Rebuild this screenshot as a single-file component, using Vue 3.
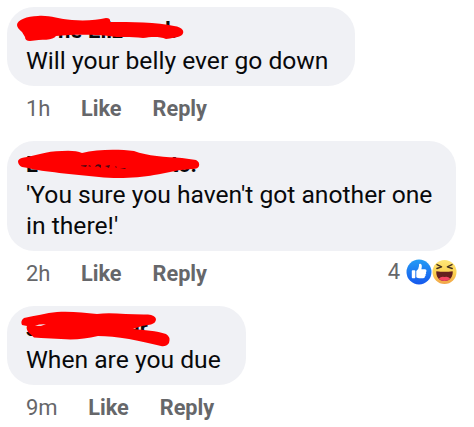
<script setup>
const comments = [
  {
    id: 1, size: 'first', lines: ['Will your belly ever go down'], age: '1h',
    strokes: ['M17 25C17 20 27 16 38 16C49 15 58 19 72 20C86 21 97 20 106 18Q111 18 110 22C130 22 158 22 174 26C183 27 185 32 182 35C178 38 171 38 166 39C159 36 150 37 143 38C130 36 119 38 109 36C87 34 70 35 56 36C53 41 42 39 30 41Q25 41 25 37L22 32Q17 28 17 25Z'],
    bits: [{ x: 58, t: 'ne' }, { x: 88, t: 'Eliz' }, { x: 165, t: 'l.' }],
    hints: [],
  },
  {
    id: 2, size: 'second', lines: ["'You sure you haven't got another one", "in there!'"], age: '2h', count: 4,
    strokes: ['M24 157.500C36 156 45 151 62 151Q75 150 82 153C97 149 119 149 134 151C147 156 166 157 182 158L196 160Q200 162 199 166Q198 169 193 169C181 169 167 173 154 175C139 178 116 179 99 177C73 174 43 172 28 168L22 167Q18 165 18 161Q19 158 24 157.500Z'],
    bits: [{ x: 26, t: 'L' }, { x: 171, t: 'to.' }],
    hints: ['M81 165.500L87 165 86 167 81 166Z', 'M88 166L90 165 91 167Z M95 167Q96 163 101 165L101 168 98 166Z M105 166L110 165 109 168Z M115 167L116 166 117 168 M120 168L126 168 125 169Z'],
  },
  {
    id: 3, size: 'third', lines: ['When are you due'], age: '9m',
    strokes: ['M24 318C35 316 46 313 57 312C72 311 84 313 97 314C112 312 129 315 148 314.500Q155 315 156 319Q156 323 151 324.500L142 326 133 329C144 330 157 331 166 334Q171 337 169 343Q166 347 161 346C151 344 141 341 129 339C117 337 107 336 98 336C85 339 74 340 61 339L41 338 34 337.500 29 333Q26 330 27 326L22 325Q20 321 24 318Z'],
    bits: [{ x: 26, t: 's' }, { x: 128, t: 'ar' }],
    hints: [],
  },
]
const tops = [7, 141, 306]
</script>

<template>
  <main class="thread">
    <article v-for="(c, i) in comments" :key="c.id" class="comment" :class="c.size">
      <div class="bubble">
        <svg class="name" width="220" height="38" :viewBox="`7 ${tops[i]} 220 38`" aria-hidden="true">
          <text v-for="b in c.bits" :key="b.x" :x="b.x" :y="tops[i] + (i === 2 ? 29.5 : 30.5)" class="bit">{{ b.t }}</text>
          <path v-for="s in c.strokes" :key="s" :d="s" fill="#ff0000" />
          <path v-for="h in c.hints" :key="h" :d="h" fill="#4b0710" />
          <path v-if="i === 2" d="M35 326L39 324.500 46 324 41 326Z" fill="#f1d8dd" />
        </svg>
        <p v-for="l in c.lines" :key="l" class="line">{{ l }}</p>
      </div>
      <div class="meta">
        <span class="age">{{ c.age }}</span>
        <b class="like">Like</b>
        <b>Reply</b>
        <span v-if="c.count" class="reactions">
          <span class="count">{{ c.count }}</span>
          <svg width="51" height="26" viewBox="0 0 51 26">
            <defs>
              <linearGradient id="blue" x2="0" y2="1"><stop stop-color="#249cf5" /><stop offset="1" stop-color="#1558ed" /></linearGradient>
              <linearGradient id="yellow" x2="0" y2="1"><stop stop-color="#ffe779" /><stop offset=".55" stop-color="#fbd14f" /><stop offset="1" stop-color="#f1a34a" /></linearGradient>
            </defs>
            <circle cx="13" cy="13" r="12.500" fill="url(#blue)" />
            <path d="M5.800 12Q5.800 11.200 6.600 11.200H8.500Q9.300 11.200 9.300 12V18.300Q9.300 19.200 8.500 19.200H6.600Q5.800 19.200 5.800 18.300ZM10.300 12Q12.900 9.800 13 7V5.400Q13.300 4.500 14.300 4.800C16.200 5.300 16 8 15.400 10.200H19Q20.700 10.400 20.500 12Q20.400 12.800 19.900 13.100Q20.800 14.400 19.500 15.400Q20.100 16.700 18.900 17.400Q19 19.100 17.200 19.200H13.500Q11.500 19.100 10.300 18.200Z" fill="#fff" />
            <circle cx="38.500" cy="13" r="12" fill="url(#yellow)" />
            <path d="M31 5.600L35.600 7.800 30.900 9.500M46 5.600L41.300 7.800 46.200 9.500" fill="none" stroke="#453020" stroke-width="1.400" stroke-linecap="round" stroke-linejoin="round" />
            <path d="M30.300 12.200Q38.500 13.300 46.700 12.200C47.200 17 44.300 22 38.500 22S29.800 17 30.300 12.200Z" fill="#64201f" />
            <path d="M32.800 19.700Q35 17 38.500 18Q42 17 44.200 19.700Q42 22 38.500 22T32.800 19.700Z" fill="#f34462" />
          </svg>
        </span>
      </div>
    </article>
  </main>
</template>

<style>
body { margin: 0; background: #fff; }
</style>
<style scoped>
.thread {
  box-sizing: border-box;
  width: 474px;
  height: 427px;
  padding: 7px 0 0 7px;
  overflow: hidden;
  font-family: Roboto, "Liberation Sans", sans-serif;
}
.comment { height: 134px; }
.second { height: 165px; }
.bubble {
  box-sizing: border-box;
  width: 348px;
  height: 79px;
  border-radius: 27px;
  background: #f0f1f5;
}
.second .bubble { width: 449px; height: 110px; }
.third .bubble { width: 239px; }
.name { display: block; overflow: visible; }
.bit { font-size: 22px; font-weight: 700; fill: #08090b; }
.line {
  margin: 0 0 0 19px;
  font-size: 24.650px;
  line-height: 31px;
  color: #08090b;
  white-space: nowrap;
}
.meta {
  display: flex;
  align-items: center;
  width: 450px;
  height: 26px;
  padding-top: 10px;
  font-size: 22px;
  line-height: 26px;
  color: #66676a;
}
.age { margin-left: 19px; }
.like { margin: 0 31px 0 30.500px; }
.meta b { font-size: 21.700px; font-weight: 700; }
.reactions { display: flex; align-items: center; gap: 6px; margin: 0 0 4px auto; }
</style>
